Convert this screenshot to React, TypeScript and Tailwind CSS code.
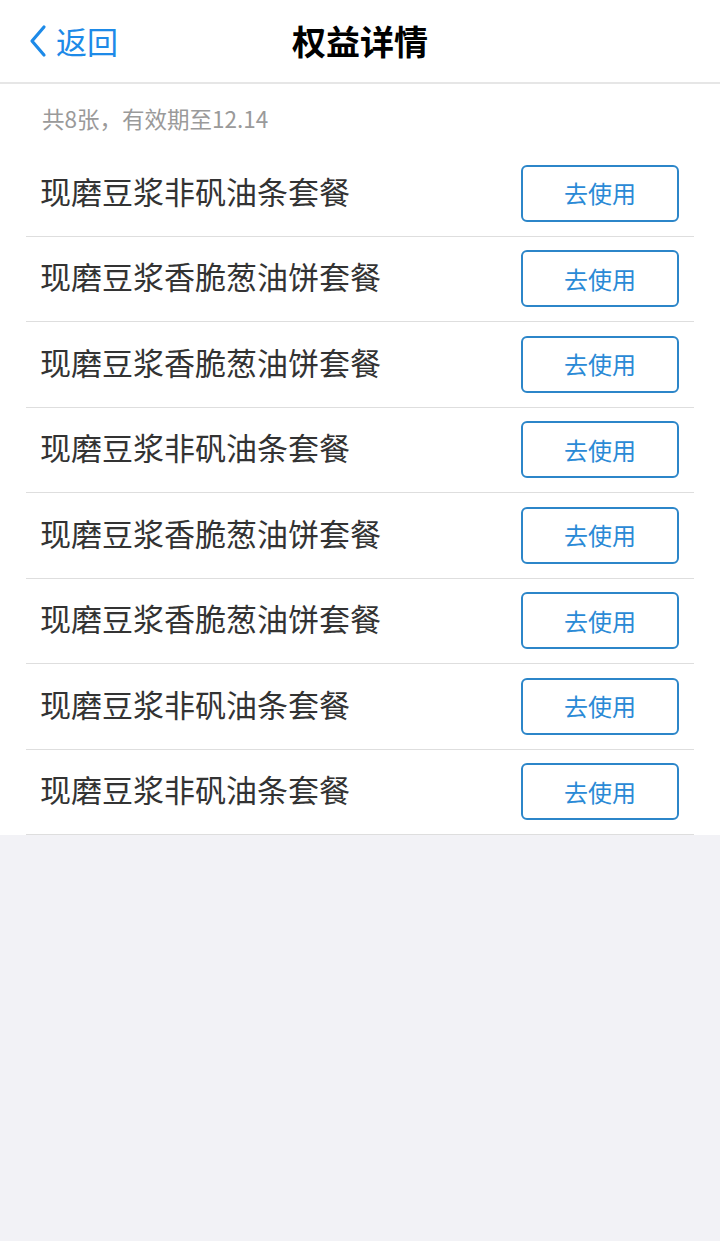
const ITEMS = [
  "现磨豆浆非矾油条套餐",
  "现磨豆浆香脆葱油饼套餐",
  "现磨豆浆香脆葱油饼套餐",
  "现磨豆浆非矾油条套餐",
  "现磨豆浆香脆葱油饼套餐",
  "现磨豆浆香脆葱油饼套餐",
  "现磨豆浆非矾油条套餐",
  "现磨豆浆非矾油条套餐",
];

const FONT = { fontFamily: '"Noto Sans CJK SC", "Noto Sans", sans-serif' };

export default function App() {
  return (
    <div className="min-h-[1241px] w-[720px] bg-[#f2f2f6]" style={FONT}>
      {/* Header */}
      <header className="relative flex h-[84px] items-center justify-center border-b-2 border-[#e6e6e6] bg-white">
        <button className="absolute left-[24px] top-[21px] flex items-center text-[#1d8ae8]">
          <svg width="26" height="40" viewBox="0 0 26 40" fill="none">
            <path d="M20 6 L8 20 L20 34" stroke="currentColor" strokeWidth="3.2" strokeLinecap="round" strokeLinejoin="round" />
          </svg>
          <span className="ml-[6px] text-[31px] leading-[40px]">返回</span>
        </button>
        <h1 className="text-[34px] font-bold leading-none text-black">权益详情</h1>
      </header>

      <main className="bg-white">
        <p className="px-[42px] pb-[18px] pt-[19px] text-[22.5px] leading-[30px] text-[#9a9a9a]">
          共8张，有效期至12.14
        </p>
        <ul className="px-[26px]">
          {ITEMS.map((name, i) => (
            <li
              key={i}
              className="flex h-[85.5px] items-center justify-between border-b border-[#dedede] pl-[14px] pr-[15px]"
            >
              <span className="mb-[6px] text-[31px] leading-none text-[#333333]">{name}</span>
              <button className="flex h-[57px] w-[158px] items-center justify-center rounded-[6px] border-2 border-[#2c86c9] text-[24px] text-[#2a8ad6]">
                去使用
              </button>
            </li>
          ))}
        </ul>
      </main>
    </div>
  );
}
